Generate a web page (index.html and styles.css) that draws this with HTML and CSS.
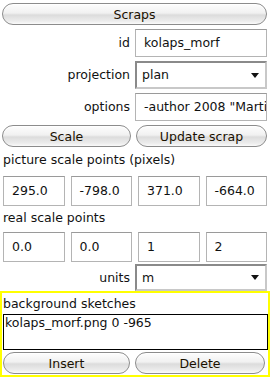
FILE: index.html
```html
<!DOCTYPE html>
<html lang="en">
<head>
  <meta charset="UTF-8">
  <title>Scraps</title>
  <link rel="stylesheet" href="styles.css">
</head>
<body>
  <div class="panel">
    <button class="pill wide">Scraps</button>

    <div class="form">
      <label class="label">id</label>
      <div class="field">kolaps_morf</div>
      <label class="label">projection</label>
      <div class="combo">plan<span class="arrow"></span></div>
      <label class="label">options</label>
      <div class="field">-author 2008 "Martin Budaj"</div>
    </div>

    <div class="pair">
      <button class="pill">Scale</button>
      <button class="pill">Update scrap</button>
    </div>

    <div class="caption">picture scale points (pixels)</div>
    <div class="quad">
      <div class="field">295.0</div>
      <div class="field">-798.0</div>
      <div class="field">371.0</div>
      <div class="field">-664.0</div>
    </div>

    <div class="caption">real scale points</div>
    <div class="quad">
      <div class="field">0.0</div>
      <div class="field">0.0</div>
      <div class="field">1</div>
      <div class="field">2</div>
    </div>

    <div class="form units">
      <label class="label">units</label>
      <div class="combo">m<span class="arrow"></span></div>
    </div>

    <div class="sketches">
      <div class="caption small">background sketches</div>
      <div class="list">kolaps_morf.png 0 -965</div>
      <div class="pair">
        <button class="pill">Insert</button>
        <button class="pill">Delete</button>
      </div>
    </div>
  </div>
</body>
</html>
```

FILE: styles.css
```css
body {
  margin: 0;
  background: #fff;
  font-family: "DejaVu Sans", "Liberation Sans", sans-serif;
  font-size: 12.5px;
  color: #111;
}
.panel {
  width: 270px;
  padding-top: 3px;
}
.pill {
  display: block;
  height: 22px;
  padding: 0;
  font: inherit;
  color: #1a1000;
  border: 1px solid #8c8c8c;
  border-radius: 11px;
  background: linear-gradient(#fdfdfd 0%, #f1f1f1 45%, #dcdcdc 55%, #ececec 85%, #fafafa 100%);
  box-shadow: inset 0 1px 0 #fff;
}
.wide {
  width: 265px;
  margin-left: 2px;
}
.form {
  display: grid;
  grid-template-columns: 1fr 132px;
  column-gap: 5px;
  row-gap: 4px;
  margin: 4px 3px 0 0;
}
.label {
  text-align: right;
  line-height: 28px;
}
.field {
  height: 28px;
  box-sizing: border-box;
  border: 1px solid #b4b4b4;
  border-top-color: #9a9a9a;
  padding: 0 8px;
  line-height: 26px;
  white-space: nowrap;
  overflow: hidden;
  background: #fff;
}
.combo {
  position: relative;
  height: 28px;
  box-sizing: border-box;
  border: 2px solid #8a8a8a;
  border-right-color: #c8c8c8;
  border-bottom-color: #c8c8c8;
  padding: 0 5px;
  line-height: 24px;
}
.arrow {
  position: absolute;
  right: 6px;
  top: 10px;
  border-left: 4px solid transparent;
  border-right: 4px solid transparent;
  border-top: 5px solid #111;
}
.pair {
  display: grid;
  grid-template-columns: 129px 131px;
  column-gap: 5px;
  margin: 4px 0 0 2px;
}
.caption {
  margin: 3px 0 0 3px;
  line-height: 20px;
}
.quad {
  display: grid;
  grid-template-columns: repeat(4, 1fr);
  column-gap: 6px;
  margin: 6px 3px 0 3px;
}
.quad + .caption {
  margin-top: 2px;
}
.quad + .caption + .quad {
  margin-top: 4px;
}
.quad .field {
  height: 30px;
  line-height: 28px;
  padding: 0 8px;
}
.units {
  margin-top: 2px;
}
.units .label {
  line-height: 27px;
}
.units .combo {
  height: 27px;
  line-height: 23px;
}
.units .arrow {
  top: 9px;
}
.sketches {
  border: 2px solid #ffff00;
  height: 86px;
  box-sizing: border-box;
}
.caption.small {
  margin: 2px 0 0 1px;
  line-height: 18px;
}
.list {
  height: 36px;
  box-sizing: border-box;
  border: 1px solid #000;
  margin: 1px 0 0 1px;
  padding: 0 1px;
  line-height: 16px;
}
.sketches .pair {
  margin: 2px 0 0 1px;
  grid-template-columns: 127px 130px;
}
```
